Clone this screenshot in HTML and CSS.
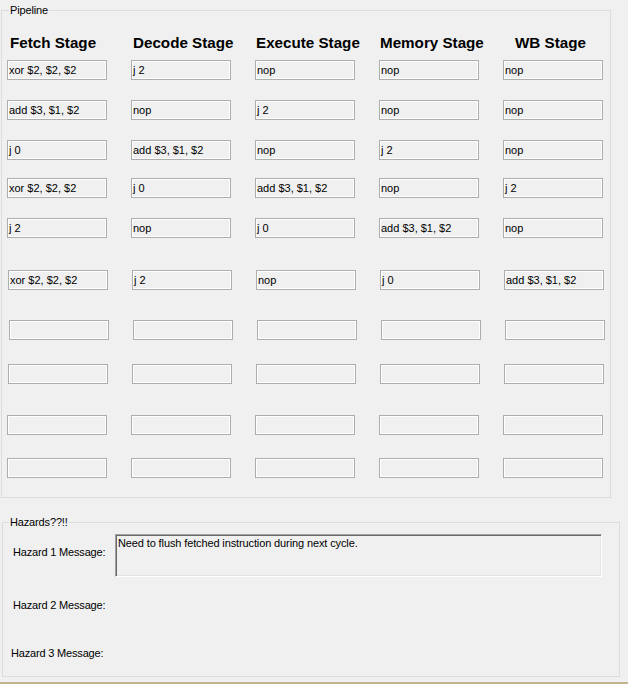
FILE: index.html
```html
<!DOCTYPE html>
<html>
<head>
<meta charset="utf-8">
<link rel="stylesheet" href="styles.css">
</head>
<body>
<fieldset class="group pipeline">
  <legend class="legend">Pipeline</legend>
  <div class="pipe-body">
    <div class="heads">
      <div class="head h1">Fetch Stage</div>
      <div class="head h2">Decode Stage</div>
      <div class="head h3">Execute Stage</div>
      <div class="head h4">Memory Stage</div>
      <div class="head h5">WB Stage</div>
    </div>
    <div class="row">
      <div class="tb">xor $2, $2, $2</div><div class="tb">j 2</div><div class="tb">nop</div><div class="tb">nop</div><div class="tb">nop</div>
    </div>
    <div class="row">
      <div class="tb">add $3, $1, $2</div><div class="tb">nop</div><div class="tb">j 2</div><div class="tb">nop</div><div class="tb">nop</div>
    </div>
    <div class="row">
      <div class="tb">j 0</div><div class="tb">add $3, $1, $2</div><div class="tb">nop</div><div class="tb">j 2</div><div class="tb">nop</div>
    </div>
    <div class="row">
      <div class="tb">xor $2, $2, $2</div><div class="tb">j 0</div><div class="tb">add $3, $1, $2</div><div class="tb">nop</div><div class="tb">j 2</div>
    </div>
    <div class="row">
      <div class="tb">j 2</div><div class="tb">nop</div><div class="tb">j 0</div><div class="tb">add $3, $1, $2</div><div class="tb">nop</div>
    </div>
    <div class="row shift1">
      <div class="tb">xor $2, $2, $2</div><div class="tb">j 2</div><div class="tb">nop</div><div class="tb">j 0</div><div class="tb">add $3, $1, $2</div>
    </div>
    <div class="row shift2">
      <div class="tb"></div><div class="tb"></div><div class="tb"></div><div class="tb"></div><div class="tb"></div>
    </div>
    <div class="row shift1">
      <div class="tb"></div><div class="tb"></div><div class="tb"></div><div class="tb"></div><div class="tb"></div>
    </div>
    <div class="row">
      <div class="tb"></div><div class="tb"></div><div class="tb"></div><div class="tb"></div><div class="tb"></div>
    </div>
    <div class="row">
      <div class="tb"></div><div class="tb"></div><div class="tb"></div><div class="tb"></div><div class="tb"></div>
    </div>
  </div>
</fieldset>
<fieldset class="group hazards">
  <legend class="legend">Hazards??!!</legend>
  <div class="haz-body">
    <div class="haz-row">
      <div class="haz-label">Hazard 1 Message:</div>
      <div class="msg">Need to flush fetched instruction during next cycle.</div>
    </div>
    <div class="haz-row r2">
      <div class="haz-label">Hazard 2 Message:</div>
    </div>
    <div class="haz-row r3">
      <div class="haz-label">Hazard 3 Message:</div>
    </div>
  </div>
</fieldset>
<div class="frame-edge"></div>
</body>
</html>
```

FILE: styles.css
```css
html, body {
  margin: 0;
  padding: 0;
}
body {
  width: 628px;
  height: 684px;
  overflow: hidden;
  background: #f0f0f0;
  font-family: "Liberation Sans", Arial, sans-serif;
  font-size: 11px;
  color: #000;
}
.group {
  box-sizing: border-box;
  margin: 0;
  padding: 0;
  border: 1px solid #dcdcdc;
  min-width: 0;
}
.legend {
  font-size: 11px;
  line-height: 13px;
  padding: 0 1px;
  letter-spacing: -0.15px;
}
.pipeline {
  margin-top: 4px;
  margin-left: 1px;
  width: 610px;
}
.pipeline .legend {
  margin-left: 7px;
}
.pipe-body {
  padding: 17px 0 19px 5px;
}
.heads {
  display: grid;
  grid-template-columns: repeat(5, 100px);
  column-gap: 24px;
  height: 18px;
}
.head {
  font-size: 15.2px;
  font-weight: bold;
  line-height: 18px;
  white-space: nowrap;
}
.h1 { padding-left: 3px; }
.h2 { padding-left: 2px; }
.h3 { padding-left: 1px; }
.h4 { padding-left: 1px; }
.h5 { padding-left: 12px; }
.row {
  display: grid;
  grid-template-columns: repeat(5, 100px);
  column-gap: 24px;
  margin-top: 20px;
}
.row:nth-child(2) { margin-top: 8px; }
.row:nth-child(5) { margin-top: 18px; }
.row:nth-child(7) { margin-top: 32px; }
.row:nth-child(8) { margin-top: 30px; }
.row:nth-child(9) { margin-top: 24px; }
.row:nth-child(10) { margin-top: 31px; }
.row:nth-child(11) { margin-top: 23px; }
.shift1 { padding-left: 1px; }
.shift2 { padding-left: 2px; }
.tb {
  box-sizing: border-box;
  height: 20px;
  border: 1px solid #adadad;
  box-shadow: inset 0 0 0 1px #fff;
  padding: 0 1px;
  line-height: 18px;
  white-space: nowrap;
  overflow: hidden;
}
.hazards {
  margin-top: 18px;
  margin-left: 2px;
  width: 618px;
}
.hazards .legend {
  margin-left: 6px;
}
.haz-body {
  padding: 5px 0 16px 0;
}
.haz-row {
  display: flex;
  align-items: flex-start;
}
.haz-label {
  line-height: 13px;
  width: 102px;
  padding-left: 10px;
  margin-top: 12px;
  white-space: nowrap;
  letter-spacing: -0.18px;
}
.r2 .haz-label { margin-top: 22px; }
.r3 .haz-label { margin-top: 35px; padding-left: 8px; }
.msg {
  box-sizing: border-box;
  width: 487px;
  height: 43px;
  border: 1px solid;
  border-color: #a0a0a0 #ffffff #ffffff #a0a0a0;
  box-shadow: inset 1px 1px 0 #696969, inset -1px -1px 0 #e3e3e3;
  padding: 2px 0 0 2px;
  line-height: 13px;
  letter-spacing: -0.12px;
}
.frame-edge {
  margin-top: 5px;
  height: 3px;
  background: #c2b48e;
}
```
